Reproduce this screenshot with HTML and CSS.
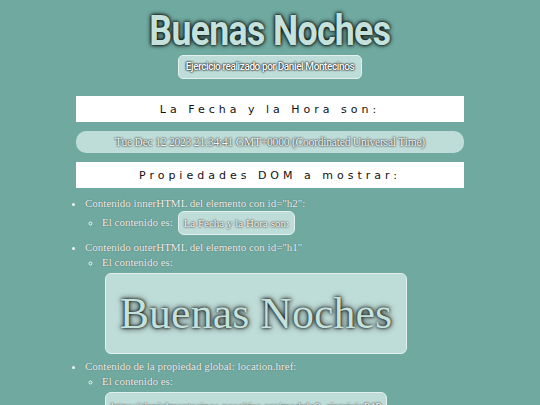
FILE: index.html
```html
<!DOCTYPE html>
<html lang="es">
<head>
<meta charset="utf-8">
<title>Buenas Noches</title>
<link rel="stylesheet" href="styles.css">
</head>
<body>
<header class="header">
  <h1 class="title" id="h1">Buenas Noches</h1>
  <p class="author">Ejercicio realizado por Daniel Montecinos</p>
</header>
<main class="main">
  <h2 class="section" id="h2">La Fecha y la Hora son:</h2>
  <p class="date">Tue Dec 12 2023 21:34:41 GMT+0000 (Coordinated Universal Time)</p>
  <h2 class="section">Propiedades DOM a mostrar:</h2>
  <ul class="props">
    <li>Contenido innerHTML del elemento con id="h2":
      <ul class="sub">
        <li>El contenido es: <span class="value">La Fecha y la Hora son:</span></li>
      </ul>
    </li>
    <li>Contenido outerHTML del elemento con id="h1"
      <ul class="sub">
        <li>El contenido es:
          <div class="value big"><span class="big-title">Buenas Noches</span></div>
        </li>
      </ul>
    </li>
    <li>Contenido de la propiedad global: location.href:
      <ul class="sub">
        <li>El contenido es:
          <div class="url-wrap"><span class="value url">https://danielmontecinos.neocities.org/modulo3_ejercicioP4P</span></div>
        </li>
      </ul>
    </li>
  </ul>
</main>
</body>
</html>
```

FILE: styles.css
```css
html, body {
  margin: 0;
  padding: 0;
}
body {
  background: #6fa99f;
  font-family: "Liberation Serif", "DejaVu Serif", serif;
  color: #e8f3f1;
  overflow: hidden;
}
.header {
  display: flex;
  flex-direction: column;
  align-items: center;
  padding-top: 9px;
}
.title {
  margin: 0;
  font-family: Roboto, sans-serif;
  font-weight: 700;
  font-size: 42px;
  line-height: 44px;
  letter-spacing: -0.8px;
  color: #c4e1dc;
  text-shadow: 0 0 6px #000, 0 0 3px #000;
  transform: scaleX(0.85);
}
.author {
  margin: 2px 0 0;
  padding: 5px 7px;
  font-family: Roboto, sans-serif;
  font-weight: 500;
  font-size: 10px;
  line-height: 12px;
  letter-spacing: -0.4px;
  color: #fff;
  background: #bfddd8;
  border: 1px solid #e2f1ee;
  border-radius: 5px;
  text-shadow: 0 0 2px #000, 0 0 2px #000;
}
.main {
  width: 388px;
  margin: 17px auto 0;
}
.section {
  margin: 0;
  height: 26px;
  display: flex;
  align-items: center;
  justify-content: center;
  background: #fff;
  color: #111;
  font-family: "DejaVu Sans", sans-serif;
  font-weight: normal;
  font-size: 11px;
  letter-spacing: 4px;
}
.date {
  margin: 9px 0;
  height: 22px;
  display: flex;
  align-items: center;
  justify-content: center;
  background: #bfddd8;
  border-radius: 10px;
  font-size: 11.5px;
  letter-spacing: -0.2px;
  color: #eef6f5;
  text-shadow: 0 0 2px #333, 0 0 2px #333;
}
.props {
  margin: 8px 0 0;
  padding-left: 9px;
  font-size: 11px;
  line-height: 15px;
  color: #eef6f5;
  text-shadow: 0 0 1px #444;
}
.props > li + li {
  margin-top: 5px;
}
.sub {
  list-style: circle;
  padding-left: 17px;
  margin: 0;
}
.value {
  display: inline-block;
  vertical-align: middle;
  line-height: 14px;
  background: #bfddd8;
  border: 1px solid #e2f1ee;
  border-radius: 6px;
  padding: 4px 5px;
  margin-left: 2px;
  color: #f2f8f7;
  text-shadow: 0 0 2px #444, 0 0 2px #444;
}
.big {
  display: flex;
  margin: 3px 0 0 3px;
  width: 302px;
  height: 81px;
  box-sizing: border-box;
  align-items: center;
  justify-content: center;
  padding: 0;
}
.big-title {
  font-size: 44px;
  line-height: 50px;
  color: #c4e1dc;
  text-shadow: 0 0 6px #000, 0 0 3px #000;
}
.url-wrap {
  margin: 3px 0 0 1px;
}
.url {
  white-space: nowrap;
  padding: 6px 5px;
}
```
